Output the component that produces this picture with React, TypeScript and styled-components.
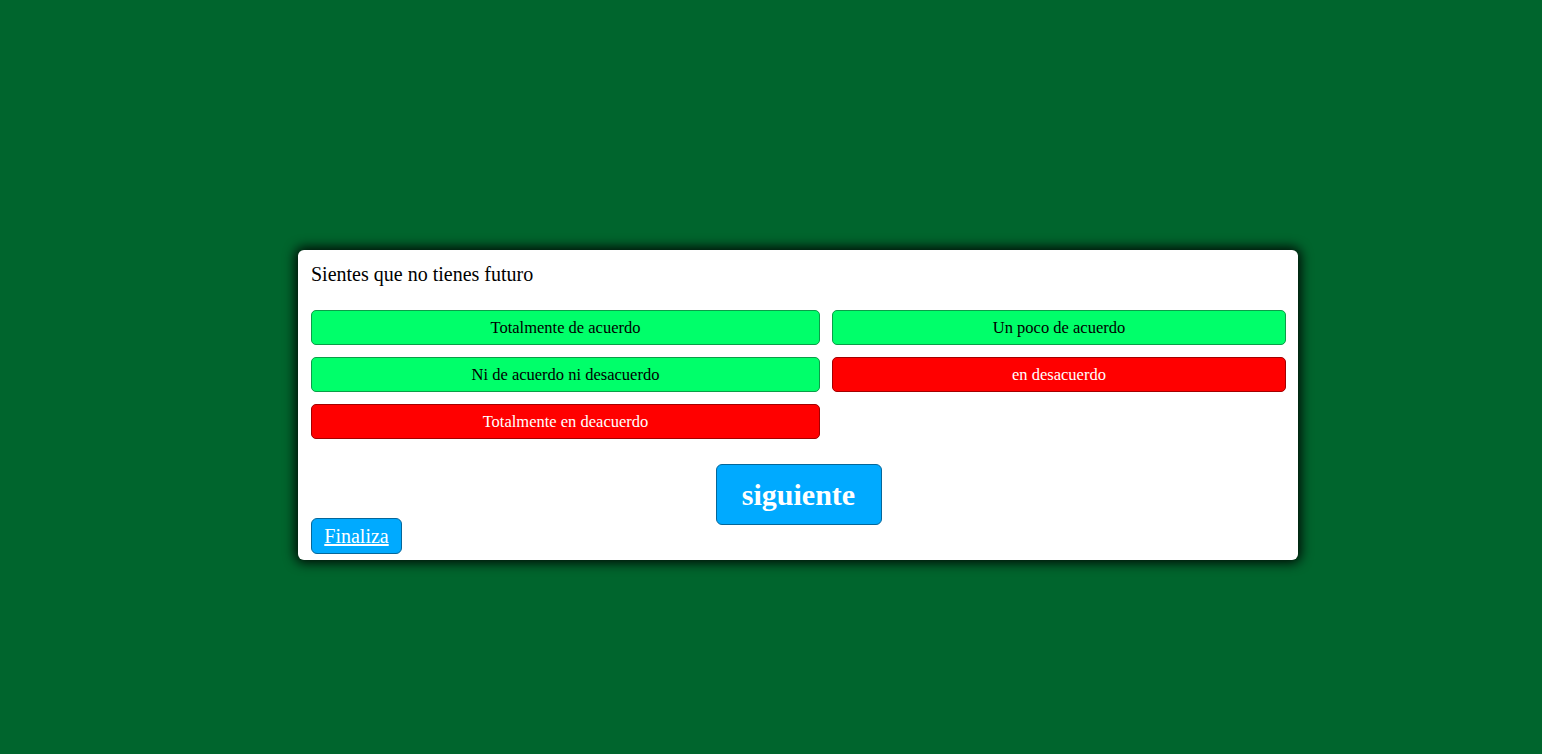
import React from "react";
import styled, { createGlobalStyle } from "styled-components";

const GlobalStyle = createGlobalStyle`
  html, body {
    margin: 0;
    padding: 0;
    background: #00652d;
    height: 100%;
  }
  body {
    font-family: "Liberation Serif", "Times New Roman", serif;
  }
`;

const Page = styled.div`
  min-height: 754px;
  padding: 250px 0 0 298px;
  box-sizing: border-box;
`;

const Card = styled.div`
  width: 1000px;
  height: 310px;
  box-sizing: border-box;
  background: #ffffff;
  border-radius: 6px;
  box-shadow: 0 0 12px 3px rgba(0, 0, 0, 0.9);
  padding: 13px 12px 6px 13px;
  display: flex;
  flex-direction: column;
`;

const Question = styled.div`
  font-size: 20px;
  line-height: 22px;
  color: #000;
  margin-bottom: 25px;
`;

const Options = styled.div`
  display: grid;
  grid-template-columns: 509px 454px;
  gap: 12px;
`;

const Option = styled.button<{ $good: boolean }>`
  height: 35px;
  font-family: inherit;
  font-size: 16.5px;
  border-radius: 5px;
  border: 1px solid ${(p) => (p.$good ? "#0a9e48" : "#a30000")};
  background: ${(p) => (p.$good ? "#00ff6a" : "#ff0000")};
  color: ${(p) => (p.$good ? "#000" : "#fff")};
  cursor: pointer;
  padding: 0 8px;
`;

const Footer = styled.div`
  display: flex;
  flex-direction: column;
  margin-top: 25px;
`;

const Next = styled.button`
  align-self: center;
  width: 166px;
  height: 61px;
  font-family: inherit;
  font-size: 30px;
  font-weight: bold;
  color: #fff;
  background: #00aaff;
  border: 1px solid #05679a;
  border-radius: 6px;
  cursor: pointer;
`;

const Finish = styled.a`
  align-self: flex-start;
  margin-top: -7px;
  width: 91px;
  height: 36px;
  box-sizing: border-box;
  display: flex;
  align-items: center;
  justify-content: center;
  font-size: 20px;
  color: #fff;
  text-decoration: underline;
  background: #00aaff;
  border: 1px solid #05679a;
  border-radius: 6px;
`;

const options = [
  { label: "Totalmente de acuerdo", good: true },
  { label: "Un poco de acuerdo", good: true },
  { label: "Ni de acuerdo ni desacuerdo", good: true },
  { label: "en desacuerdo", good: false },
  { label: "Totalmente en deacuerdo", good: false },
];

export default function App() {
  return (
    <>
      <GlobalStyle />
      <Page>
        <Card>
          <Question>Sientes que no tienes futuro</Question>
          <Options>
            {options.map((o) => (
              <Option key={o.label} $good={o.good}>
                {o.label}
              </Option>
            ))}
          </Options>
          <Footer>
            <Next>siguiente</Next>
            <Finish href="#">Finaliza</Finish>
          </Footer>
        </Card>
      </Page>
    </>
  );
}
